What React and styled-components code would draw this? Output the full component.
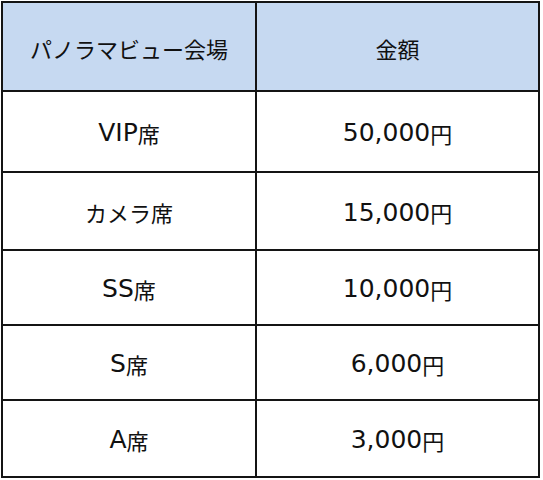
import React from 'react';
import styled, { createGlobalStyle } from 'styled-components';

const GlobalStyle = createGlobalStyle`
  html, body {
    margin: 0;
    padding: 0;
    background: #ffffff;
  }
  body {
    font-family: "DejaVu Sans", "Noto Sans CJK JP", sans-serif;
    color: #111;
  }
`;

const rows = [
  { seat: 'VIP席', price: '50,000円', h: 79 },
  { seat: 'カメラ席', price: '15,000円', h: 76 },
  { seat: 'SS席', price: '10,000円', h: 73 },
  { seat: 'S席', price: '6,000円', h: 73 },
  { seat: 'A席', price: '3,000円', h: 75 },
];

const Page = styled.div`
  padding: 1px 0 0 1px;
`;

const Grid = styled.div`
  display: grid;
  grid-template-columns: 252px 281px;
  grid-template-rows: 87px ${rows.map((r) => r.h + 'px').join(' ')};
  gap: 2px;
  padding: 2px;
  width: max-content;
  background: #141414;
`;

const Cell = styled.div`
  display: flex;
  align-items: center;
  justify-content: center;
  padding-top: 2px;
  background: ${(p) => (p.$head ? '#c6d9f1' : '#ffffff')};
  font-family: "Noto Sans CJK JP", sans-serif;
  font-size: 22px;
  line-height: 1;
  color: #111;
  white-space: nowrap;
`;

const Latin = styled.span`
  font-family: "DejaVu Sans", sans-serif;
  font-size: 25px;
`;

// Meiryo-like look: latin letters and digits sit larger than the kana
function MixedText({ text }) {
  const parts = text.match(/[\x00-\x7f]+|[^\x00-\x7f]+/g) || [];
  return parts.map((part, i) =>
    /^[\x00-\x7f]+$/.test(part) ? <Latin key={i}>{part}</Latin> : <span key={i}>{part}</span>
  );
}

export default function App() {
  return (
    <Page>
      <GlobalStyle />
      <Grid>
        <Cell $head>パノラマビュー会場</Cell>
        <Cell $head>金額</Cell>
        {rows.map((r) => (
          <React.Fragment key={r.seat}>
            <Cell>
              <MixedText text={r.seat} />
            </Cell>
            <Cell>
              <MixedText text={r.price} />
            </Cell>
          </React.Fragment>
        ))}
      </Grid>
    </Page>
  );
}
